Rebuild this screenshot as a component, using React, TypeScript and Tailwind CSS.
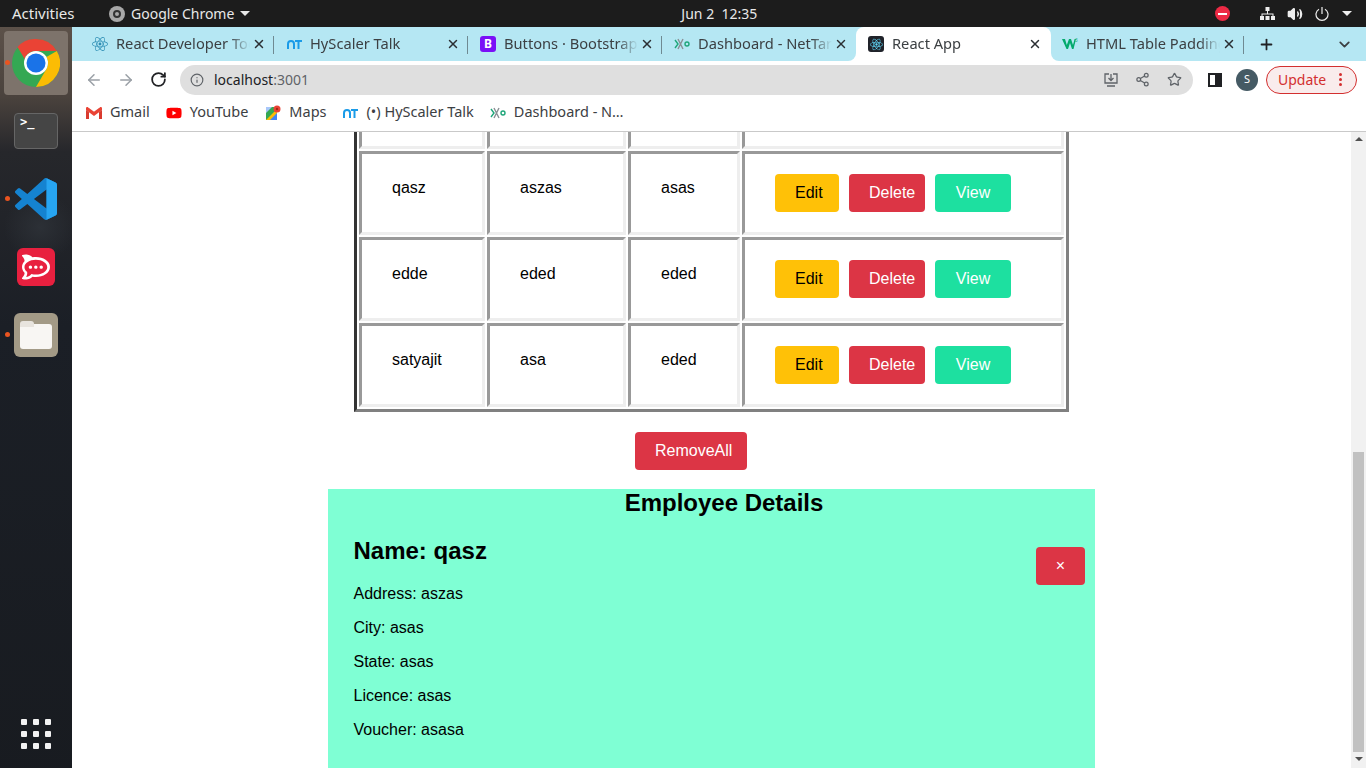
import { ArrowLeft, ArrowRight, ChevronDown, Info, Plus, RotateCw, Share2, Star, Volume2, X } from "lucide-react";
import { FaReact, FaYoutube } from "react-icons/fa";
import { SiRocketdotchat } from "react-icons/si";

const ui = "font-['Noto_Sans',sans-serif]";
const page = "font-['Liberation_Sans',Arial,sans-serif]";

function ChromeLogo({ size }: { size: number }) {
  return (
    <svg width={size} height={size} viewBox="0 0 48 48">
      <circle cx="24" cy="24" r="24" fill="#34a853" />
      <path d="M24 0a24 24 0 0 1 20.800 12H24a12 12 0 0 0-11.300 8L5.500 7.900A24 24 0 0 1 24 0z" fill="#ea4335" />
      <path d="M44.800 12A24 24 0 0 1 24 48l10.400-18A12 12 0 0 0 34.400 18z" fill="#fbbc04" />
      <circle cx="24" cy="24" r="12" fill="#fff" />
      <circle cx="24" cy="24" r="9.500" fill="#1a73e8" />
    </svg>
  );
}

function NtIcon() {
  return (
    <svg width="15" height="10" viewBox="0 0 15 10" fill="none" stroke="#1a9be8" strokeWidth="2">
      <path d="M1 10V5a3 3 0 0 1 6 0v5" />
      <path d="M8 2h7M11.500 2v8" />
    </svg>
  );
}

function NetIcon() {
  return (
    <svg width="16" height="12" viewBox="0 0 16 12" fill="none" strokeWidth="1.400">
      <path d="M1 2l3 4-3 4" stroke="#1fa67a" />
      <path d="M4 1l5 10M9 1L4 11" stroke="#8a8f94" />
      <circle cx="13" cy="6" r="2" stroke="#1fa67a" />
    </svg>
  );
}

function GmailIcon() {
  return (
    <svg width="16" height="12" viewBox="0 0 16 12">
      <path d="M0 1.500V12h3V4.500l5 3.700 5-3.700V12h3V1.500L13 1 8 4.700 3 1z" fill="#d9d9d9" />
      <path d="M0 3V1.300C0 .3 1.300-.3 2.200.4L8 4.700 13.800.4C14.700-.3 16 .3 16 1.300V3l-8 6z" fill="#ea4335" />
      <path d="M0 3v9h3V5.200zM16 3v9h-3V5.200z" fill="#d93a2e" />
    </svg>
  );
}

function MapsIcon() {
  return (
    <svg width="16" height="16" viewBox="0 0 16 16">
      <path d="M1 2h11v13H1z" fill="#34a853" />
      <path d="M1 15L12 4v11z" fill="#fbbc04" />
      <path d="M5 15l7-7v7z" fill="#4285f4" />
      <path d="M1 2h6L1 8z" fill="#a8c7fa" />
      <circle cx="12" cy="4" r="3.500" fill="#ea4335" />
      <circle cx="12" cy="4" r="1.200" fill="#a52714" />
    </svg>
  );
}

function W3Icon() {
  return (
    <svg width="16" height="12" viewBox="0 0 16 12">
      <path d="M0 1h3l1.800 6L7 1h2l2 6 1.600-6H14l-2.500 10H10L8 5l-2 6H4.500z" fill="#04aa6d" />
      <text x="13" y="4" fontSize="4.500" fill="#04aa6d">3</text>
    </svg>
  );
}

function Tab({ title, icon, active, last, corner }: { title: string; icon: React.ReactNode; active?: boolean; last?: boolean; corner?: boolean }) {
  const bg = active ? "bg-white rounded-t-lg w-[195px] pl-3" : corner ? "bg-[#b5e7f3] rounded-br-lg w-[194px] pl-3" : last ? "bg-[#b5e7f3] rounded-bl-lg w-[193px] pl-[11px]" : "bg-[#b5e7f3] w-[194px] pl-3";
  return (
    <div className={`relative flex h-full items-center ${bg}`}>
      <span className="flex w-4 justify-center">{icon}</span>
      <span className="mb-[2px] ml-2 w-[134px] overflow-hidden whitespace-nowrap text-[14.67px] text-[#3c4043] [mask-image:linear-gradient(to_right,black_85%,transparent)]">
        {title}
      </span>
      <X size={14} strokeWidth={2.500} className="ml-[2px] text-[#2b2f33]" />
      {!active && !corner && <span className="absolute right-0 top-[9px] h-[18px] w-px bg-[#6f8a92]" />}
    </div>
  );
}

function Bookmark({ icon, label, gap }: { icon: React.ReactNode; label: string; gap: string }) {
  return (
    <div className={`flex items-center ${gap}`}>
      <span className="flex w-4 justify-center">{icon}</span>
      <span className="mb-[2px] ml-2 whitespace-nowrap text-[14.5px] text-[#3c4043]">{label}</span>
    </div>
  );
}

function Dock() {
  return (
    <aside className="relative flex w-[72px] shrink-0 flex-col items-center bg-[radial-gradient(ellipse_36px_34px_at_40px_200px,#2c3036,transparent),linear-gradient(#5c5149_0px,#4a423d_70px,#26272b_125px,#1b1f26_300px,#181b20_768px)]">
      <div className="mt-1 flex h-16 w-16 items-center justify-center rounded-sm bg-[#7d736b]">
        <ChromeLogo size={48} />
      </div>
      <span className="absolute left-[5px] top-[33px] h-[5px] w-[5px] rounded-full bg-[#e95420]" />
      <div className="mt-[18px] h-9 w-11 rounded-[4px] border border-[#666] bg-[#454545] pl-[5px] pt-px font-['DejaVu_Sans_Mono',monospace] text-[12px] font-bold leading-[14px] text-white">
        {">_"}
      </div>
      <svg className="mt-[29px]" width="42" height="42" viewBox="0 0 24 24">
        <path d="M23.150 2.587L18.210.21a1.494 1.494 0 0 0-1.705.29l-9.460 8.630-4.120-3.128a.999.999 0 0 0-1.276.057L.327 7.261A1 1 0 0 0 .326 8.740L3.899 12 .326 15.260a1 1 0 0 0 .001 1.479L1.650 17.940a.999.999 0 0 0 1.276.057l4.120-3.128 9.460 8.630a1.492 1.492 0 0 0 1.704.29l4.942-2.377A1.500 1.500 0 0 0 24 20.060V3.939a1.500 1.500 0 0 0-.85-1.352zm-5.146 14.861L10.826 12l7.178-5.448v10.896z" fill="#1583d0" />
        <path d="M18 .2l5.150 2.387A1.500 1.500 0 0 1 24 3.939V20.060a1.500 1.500 0 0 1-.85 1.353L18 23.800z" fill="#27a5f1" />
      </svg>
      <div className="mt-[28px] flex h-[38px] w-[38px] items-center justify-center rounded-md bg-[#e8203f]">
        <SiRocketdotchat size={28} className="text-white" />
      </div>
      <div className="mt-[27px] flex h-11 w-11 items-center justify-center rounded-md bg-[#a39a86]">
        <div className="relative mt-[2px] h-[25px] w-8 rounded-[3px] bg-[#f8f6f3]">
          <span className="absolute -top-[3px] left-0 h-[6px] w-[14px] rounded-t-[3px] bg-[#e8e4de]" />
        </div>
      </div>
      <span className="absolute left-[5px] top-[169px] h-[5px] w-[5px] rounded-full bg-[#e95420]" />
      <span className="absolute left-[5px] top-[305px] h-[5px] w-[5px] rounded-full bg-[#e95420]" />
      <div className="absolute left-[21px] top-[692px] grid grid-cols-3 gap-[6px]">
        {Array.from({ length: 9 }).map((_, i) => (
          <span key={i} className="h-[6px] w-[6px] rounded-[1px] bg-[#f2f2f2]" />
        ))}
      </div>
    </aside>
  );
}

function TopBar() {
  return (
    <header className={`flex h-[27px] shrink-0 items-center bg-[#1c1c1c] text-[14px] text-[#e8e8e8] ${ui}`}>
      <span className="ml-3 w-[97px] text-[15px]">Activities</span>
      <span className="flex h-4 w-4 items-center justify-center rounded-full bg-[#a8a8a8]">
        <span className="h-[8px] w-[8px] rounded-full border-2 border-[#333]" />
      </span>
      <span className="ml-[6px]">Google Chrome</span>
      <span className="ml-[6px] h-0 w-0 border-x-[5px] border-t-[5px] border-x-transparent border-t-[#e8e8e8]" />
      <span className="ml-[431px]">Jun 2&nbsp;&nbsp;12:35</span>
      <span className="ml-auto flex h-[15px] w-[15px] items-center justify-center rounded-full bg-[#ed2a45]">
        <span className="h-[2px] w-[9px] bg-white" />
      </span>
      <svg className="ml-[30px]" width="15" height="13" viewBox="0 0 15 13" fill="#eee">
        <path d="M5.500 0h4v4h-4zM0 9h4v4H0zM11 9h4v4h-4zM5.500 9h4v4h-4z" />
        <path d="M7 4h1v2.500h5.500V9h-1V7.500h-10V9h-1V6.500H7z" />
      </svg>
      <Volume2 size={16} className="ml-[12px] fill-[#eee] text-[#eee]" />
      <svg className="ml-[12px]" width="14" height="14" viewBox="0 0 14 14" fill="none" stroke="#eee" strokeWidth="1.200">
        <path d="M4 2.200a6 6 0 1 0 6 0M7 0v7" />
      </svg>
      <span className="ml-[13px] mr-[14px] h-0 w-0 border-x-[5px] border-t-[5px] border-x-transparent border-t-[#eee]" />
    </header>
  );
}

function TableRow({ name, address, city }: { name: string; address: string; city: string }) {
  const td = "border-[3px] border-t-[#999] border-l-[#999] border-b-[#eee] border-r-[#eee] px-[30px] pb-5 align-top text-[16px] leading-6";
  return (
    <tr>
      <td className={`${td} pt-[22px]`}>{name}</td>
      <td className={`${td} pt-[22px]`}>{address}</td>
      <td className={`${td} pt-[22px]`}>{city}</td>
      <td className={`${td} pt-5`}>
        <div className="flex gap-[10px]">
          <button className="h-[38px] w-16 rounded-[4px] bg-[#ffc107] pl-5 text-left text-black">Edit</button>
          <button className="h-[38px] w-[76px] rounded-[4px] bg-[#dc3545] pl-5 text-left text-white">Delete</button>
          <button className="h-[38px] w-[76px] rounded-[4px] bg-[#1de0a0] text-white">View</button>
        </div>
      </td>
    </tr>
  );
}

function EmployeePage() {
  return (
    <main className={`mx-auto w-[767px] text-black ${page}`}>
      {/* page is scrolled: the top of the table sits above the fold */}
      <table className="-mt-[72px] ml-[26px] w-[715px] table-fixed border-separate border-spacing-[2px] border-[3px] border-t-[#333] border-l-[#333] border-b-[#808080] border-r-[#808080]">
        <colgroup>
          <col className="w-[126px]" />
          <col className="w-[139px]" />
          <col className="w-[112px]" />
          <col />
        </colgroup>
        <tbody>
          <tr>
            <td className="h-[84px] border-[3px] border-t-[#999] border-l-[#999] border-b-[#eee] border-r-[#eee]" />
            <td className="border-[3px] border-t-[#999] border-l-[#999] border-b-[#eee] border-r-[#eee]" />
            <td className="border-[3px] border-t-[#999] border-l-[#999] border-b-[#eee] border-r-[#eee]" />
            <td className="border-[3px] border-t-[#999] border-l-[#999] border-b-[#eee] border-r-[#eee]" />
          </tr>
          <TableRow name="qasz" address="aszas" city="asas" />
          <TableRow name="edde" address="eded" city="eded" />
          <TableRow name="satyajit" address="asa" city="eded" />
        </tbody>
      </table>
      <button className="ml-[307px] mt-5 block h-[38px] w-28 rounded-[4px] bg-[#dc3545] pl-5 text-left text-[16px] text-white">RemoveAll</button>
      <section className="mt-[19px] h-[300px] bg-[#7fffd4]">
        <h2 className="pl-[25px] text-center text-[24px] font-bold leading-[28px]">Employee Details</h2>
        <div className="mt-[19px] flex justify-between pl-[25.500px] pr-[10px]">
          <div>
            <h3 className="text-[24px] font-bold leading-[29px]">Name: qasz</h3>
            <div className="mt-[17px] flex flex-col gap-[10px] text-[16px] leading-6">
              <p>Address: aszas</p>
              <p>City: asas</p>
              <p>State: asas</p>
              <p>Licence: asas</p>
              <p>Voucher: asasa</p>
            </div>
          </div>
          <button className="mt-[11px] h-[38px] w-[49px] rounded-[4px] bg-[#dc3545] text-[16px] text-white">×</button>
        </div>
      </section>
    </main>
  );
}

function Scrollbar() {
  return (
    <div className="flex w-[15px] shrink-0 flex-col items-center bg-[#f1f1f1]">
      <span className="mt-[5px] h-0 w-0 border-x-[4px] border-b-[4px] border-x-transparent border-b-[#505050]" />
      <div className="mt-[311px] h-[300px] w-[11px] bg-[#c1c1c1]" />
      <span className="mt-[5px] h-0 w-0 border-x-[4px] border-t-[4px] border-x-transparent border-t-[#505050]" />
    </div>
  );
}

export default function App() {
  return (
    <div className="flex h-screen w-screen flex-col overflow-hidden bg-white">
      <TopBar />
      <div className="flex min-h-0 flex-1">
        <Dock />
        <div className="flex min-w-0 flex-1 flex-col">
          <div className={`flex h-[34px] shrink-0 bg-[linear-gradient(#b5e7f3_50%,#fff_50%)] ${ui}`}>
            <div className="w-2 bg-[#b5e7f3]" />
            <Tab title="React Developer Tools" icon={<FaReact size={16} className="text-[#2f8fb5]" />} />
            <Tab title="HyScaler Talk" icon={<NtIcon />} />
            <Tab title="Buttons · Bootstrap" icon={<span className="flex h-4 w-4 items-center justify-center rounded-[3px] bg-[#7a10f7] text-[12px] font-bold text-white">B</span>} />
            <Tab title="Dashboard - NetTarget" icon={<NetIcon />} corner />
            <Tab title="React App" active icon={<span className="flex h-4 w-4 items-center justify-center rounded-[3px] bg-[#20232a]"><FaReact size={13} className="text-[#61dafb]" /></span>} />
            <Tab title="HTML Table Padding" icon={<W3Icon />} last />
            <div className="flex flex-1 items-center bg-[#b5e7f3] pl-[14px]">
              <Plus size={17} strokeWidth={2.500} className="text-[#202124]" />
              <ChevronDown size={17} strokeWidth={2.500} className="ml-[61px] text-[#3c4043]" />
            </div>
          </div>

          <div className={`flex h-[37px] shrink-0 items-center bg-white pl-[13px] ${ui}`}>
            <ArrowLeft size={18} className="text-[#9aa0a6]" />
            <ArrowRight size={18} className="ml-[14px] text-[#9aa0a6]" />
            <RotateCw size={17} strokeWidth={2.500} className="ml-[15px] text-[#202124]" />
            <div className="ml-[13px] flex h-[30px] w-[1013px] items-center rounded-full bg-[#dfdfdf] pl-[10px] pr-[10px]">
              <Info size={14} className="text-[#5f6368]" />
              <span className="ml-[10px] text-[14px] text-[#202124]">
                localhost<span className="text-[#5f6368]">:3001</span>
              </span>
              <svg className="ml-auto" width="14" height="14" viewBox="0 0 14 14" fill="none" stroke="#5f6368" strokeWidth="1.300">
                <path d="M5 1H1v9h12V1H9M7 1v6M4.500 5L7 7.500 9.500 5M3 13h8" />
              </svg>
              <Share2 size={15} className="ml-[17px] text-[#5f6368]" />
              <Star size={15} className="ml-[17px] mr-[1px] text-[#5f6368]" />
            </div>
            <span className="ml-[15px] flex h-[14px] w-[14px] justify-end border-2 border-[#202124]">
              <span className="h-full w-[5px] bg-[#202124]" />
            </span>
            <span className="ml-[14px] flex h-[22px] w-[22px] items-center justify-center rounded-full bg-[#455a64] text-[11px] text-white">S</span>
            <span className="ml-[8px] flex h-7 w-[91px] items-center rounded-full border border-[#d32f2f] bg-[#f9ecec] pl-[11px] text-[14px] text-[#d32f2f]">
              Update
              <span className="ml-[13px] flex flex-col gap-[2px]">
                <span className="h-[3px] w-[3px] rounded-full bg-[#d32f2f]" />
                <span className="h-[3px] w-[3px] rounded-full bg-[#d32f2f]" />
                <span className="h-[3px] w-[3px] rounded-full bg-[#d32f2f]" />
              </span>
            </span>
          </div>

          <div className={`flex h-[34px] shrink-0 items-center border-b border-[#c9c9c9] bg-white pb-[3px] pl-[14px] ${ui}`}>
            <Bookmark icon={<GmailIcon />} label="Gmail" gap="" />
            <Bookmark icon={<FaYoutube size={16} className="text-[#f00]" />} label="YouTube" gap="ml-[16px]" />
            <Bookmark icon={<MapsIcon />} label="Maps" gap="ml-[17px]" />
            <Bookmark icon={<NtIcon />} label="(•) HyScaler Talk" gap="ml-[16px]" />
            <Bookmark icon={<NetIcon />} label="Dashboard - N…" gap="ml-[16px]" />
          </div>

          <div className="flex min-h-0 flex-1">
            <div className="min-w-0 flex-1 overflow-hidden bg-white">
              <EmployeePage />
            </div>
            <Scrollbar />
          </div>
        </div>
      </div>
    </div>
  );
}
